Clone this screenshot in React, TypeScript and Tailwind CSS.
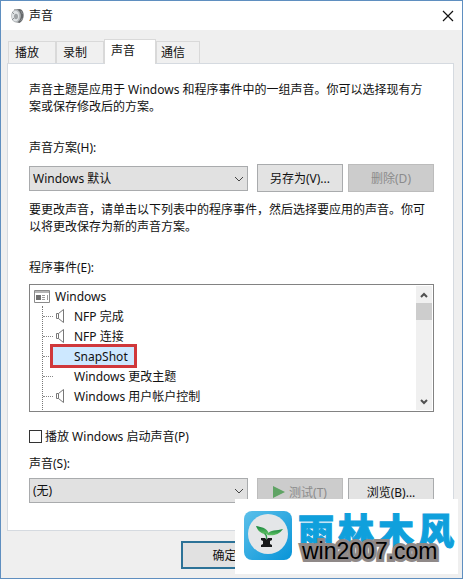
import { type ReactNode, useState } from "react";
import clsx from "clsx";

const tabs = [
  { name: "播放", size: "w-12 pl-1.5" },
  { name: "录制", size: "w-12 pl-1.5" },
  { name: "声音", size: "w-[52px] pl-1.5" },
  { name: "通信", size: "w-11 pl-1" },
];

const programEvents = [
  { name: "NFP 完成", hasSound: true },
  { name: "NFP 连接", hasSound: true },
  { name: "SnapShot", hasSound: false },
  { name: "Windows 更改主题", hasSound: false },
  { name: "Windows 用户帐户控制", hasSound: true },
];

const Chevron = ({ className }: { className?: string }) => (
  <svg viewBox="0 0 10 6" className={className} fill="none">
    <path d="M1 1l4 4 4-4" stroke="currentColor" />
  </svg>
);

const SoundIcon = () => (
  <svg viewBox="0 0 16 16" className="h-4 w-4">
    <path d="M5 1.5l6-.5c3 1 4 4 3.5 8-.5 3-2 5-4 6l-4-1z" fill="#66696b" />
    <ellipse cx="7" cy="8" rx="4.8" ry="6.5" fill="#b4b8bb" />
    <ellipse cx="6.5" cy="8" rx="3.6" ry="5.2" fill="#dfe2e4" />
    <ellipse cx="7" cy="8.5" rx="2" ry="2.8" fill="#9ea2a5" />
    <path d="M3 4l2 2M3 12l2-2M12 3l1.5 3M11.5 13l2-3" stroke="#8d9194" />
  </svg>
);

const SpeakerIcon = () => (
  <svg viewBox="0 0 10 14" className="h-3.5 w-2.5" fill="none">
    <path d="M.5 4.5h2l5-4v13l-5-4h-2zM2.5 4.5v5" stroke="#777" />
  </svg>
);

const WindowIcon = () => (
  <svg viewBox="0 0 16 13" className="h-[13px] w-4">
    <path d="M.5.5h15v12H.5z" fill="#fff" stroke="#8a8a8a" />
    <path d="M1 1h14v2H1z" fill="#b5b5b5" />
    <path d="M2 5h5v5H2z" fill="#6f6f6f" />
    <path d="M8 5.5h3M8 7.5h3M8 9.5h3M13.5 5v5" stroke="#9a9a9a" />
  </svg>
);

interface ButtonProps {
  children: ReactNode;
  disabled?: boolean;
  primary?: boolean;
}

const DialogButton = ({ children, disabled, primary }: ButtonProps) => (
  <button
    type="button"
    disabled={disabled}
    className={clsx(
      "flex h-7 shrink-0 items-center justify-center gap-1",
      primary
        ? "w-[87px] border-2 border-[#2c7297] bg-[#e1e1e1]"
        : "w-[86px] border",
      !primary && !disabled && "border-[#a9abad] bg-[#e3e3e3]",
      disabled && "border-[#bcbcbc] bg-[#cccccc] text-[#8b8b8b]"
    )}
  >
    {children}
  </button>
);

const DialogSelect = ({ id, value }: { id: string; value: string }) => (
  <div className="relative mr-1 min-w-0 flex-1">
    <select
      id={id}
      defaultValue={value}
      className="block h-[25px] w-full appearance-none border border-[#a9abad] bg-[#e1e1e1] px-[3px]"
    >
      <option>{value}</option>
    </select>
    <Chevron className="pointer-events-none absolute top-[10px] right-1 h-1.5 w-2.5 text-[#444]" />
  </div>
);

const EventList = () => {
  const [selected, setSelected] = useState<string>("SnapShot");

  return (
    <div className="mt-2 flex h-32 border border-[#828282] p-px">
      <div className="min-w-0 flex-1 overflow-hidden">
        <div className="flex h-5 items-center gap-[5px] pl-[3px]">
          <WindowIcon />
          <span>Windows</span>
        </div>
        <ul className="ml-[11px] h-[104px] border-l border-dotted border-[#777]">
          {programEvents.map(({ name, hasSound }) => (
            <li key={name} className="flex h-5 items-center">
              <span className="w-2.5 border-t border-dotted border-[#888]" />
              <button
                type="button"
                onClick={() => setSelected(name)}
                className={clsx(
                  "flex items-center text-left",
                  name === selected
                    ? "-ml-[3px] h-6 border-[3px] border-[#d0383b] bg-[#cde8ff] pr-1.5 pl-[3px]"
                    : "h-5 pl-[3px]"
                )}
              >
                <span className="w-[18px]">{hasSound && <SpeakerIcon />}</span>
                {name}
              </button>
            </li>
          ))}
        </ul>
      </div>
      <div className="flex w-4 flex-col items-center bg-[#f0f0f0] text-[#505050]">
        <button type="button" aria-label="Scroll up" className="h-[17px]">
          <svg viewBox="0 0 8 6" className="h-1.5 w-2" fill="none">
            <path d="M1 5l3-3 3 3" stroke="currentColor" strokeWidth="2" />
          </svg>
        </button>
        <div className="h-[17px] w-full bg-[#cdcdcd]" />
        <button type="button" aria-label="Scroll down" className="mt-auto h-[17px]">
          <svg viewBox="0 0 8 6" className="h-1.5 w-2" fill="none">
            <path d="M1 1l3 3 3-3" stroke="currentColor" strokeWidth="2" />
          </svg>
        </button>
      </div>
    </div>
  );
};

const SproutLogo = () => (
  <svg viewBox="0 0 48 49" className="h-[49px] w-12 shrink-0">
    <defs>
      <linearGradient id="tile" x1="0" y1="0" x2="1" y2="1">
        <stop offset="0" stopColor="#5cc0ea" />
        <stop offset="1" stopColor="#0794d8" />
      </linearGradient>
      <linearGradient id="leaf" x1="0" y1="0" x2="0" y2="1">
        <stop offset="0" stopColor="#17853d" />
        <stop offset="1" stopColor="#63c466" />
      </linearGradient>
    </defs>
    <rect width="48" height="49" rx="8" fill="url(#tile)" />
    <circle cx="24" cy="23" r="20" fill="#e4e6e8" />
    <path d="M12 15c4 1 11 1 13 8-6 1-11-2-13-8z" fill="url(#leaf)" />
    <path d="M39 18c-6 2-13 0-16 6 6 1 12 0 16-6z" fill="url(#leaf)" />
    <path d="M21 22q3 2 2 6h-1q0-4-2-5z" fill="#2f9a48" />
    <path d="M17 27h4l1.5 1.5L24 27h4v2l-2 1v3l2 1v2H17v-2l2-1v-3l-2-1z" fill="#17191a" />
  </svg>
);

const Watermark = () => (
  <div className="absolute right-1 bottom-1 flex h-[75px] w-[223px] items-start bg-white pt-3 pl-[9px]">
    <SproutLogo />
    <div className="relative ml-1.5">
      <div className="flex gap-1 font-['Noto_Sans_CJK_SC',sans-serif] text-4xl leading-9 font-black text-[#0fa0dc] [-webkit-text-stroke:1px_#0fa0dc]">
        <span>雨</span>
        <span>林</span>
        <span>木</span>
        <span>风</span>
      </div>
      <div className="absolute top-[26px] left-1 font-['Liberation_Sans',sans-serif] text-[23px] leading-7 text-black [paint-order:stroke_fill] [-webkit-text-stroke:6px_#8f8988]">
        win2007.com
      </div>
    </div>
  </div>
);

const App = () => {
  const [activeTab, setActiveTab] = useState<string>("声音");

  return (
    <div className="relative border border-[#5f8fc0] bg-[#efefef] pb-[9px] font-['Noto_Sans','Noto_Sans_CJK_SC',sans-serif] text-xs leading-[17px] text-[#111]">
      <header className="flex h-[29px] items-center bg-white pr-2 pl-2">
        <SoundIcon />
        <h1 className="ml-1">声音</h1>
        <button type="button" aria-label="Close" className="ml-auto">
          <svg viewBox="0 0 12 12" className="h-3 w-3" fill="none">
            <path d="M1 1l10 10M11 1L1 11" stroke="#111" strokeWidth="1.2" />
          </svg>
        </button>
      </header>

      <main className="mr-2 ml-1.5 pt-[9px]">
        <div role="tablist" className="flex items-end pl-px">
          {tabs.map(({ name, size }) => (
            <button
              key={name}
              type="button"
              role="tab"
              aria-selected={name === activeTab}
              onClick={() => setActiveTab(name)}
              className={clsx(
                "border border-b-0 border-[#d9d9d9] text-left",
                size,
                name === activeTab
                  ? "relative -mb-px h-[25px] bg-white pb-1"
                  : "h-[22px] bg-[#f0f0f0]"
              )}
            >
              {name}
            </button>
          ))}
        </div>

        <section className="border border-[#d5dae0] bg-white pt-[17px] pr-[19px] pb-6 pl-[21px]">
          <p className="pr-2">
            声音主题是应用于 Windows 和程序事件中的一组声音。你可以选择现有方案或保存修改后的方案。
          </p>

          <label htmlFor="scheme" className="mt-6 block">
            声音方案(H):
          </label>
          <div className="mt-2 flex items-center gap-[5px]">
            <DialogSelect id="scheme" value="Windows 默认" />
            <DialogButton>另存为(V)...</DialogButton>
            <DialogButton disabled>删除(D)</DialogButton>
          </div>

          <p className="mt-[9px] pr-2">
            要更改声音，请单击以下列表中的程序事件，然后选择要应用的声音。你可以将更改保存为新的声音方案。
          </p>

          <h2 className="mt-6">程序事件(E):</h2>
          <EventList />

          <label className="mt-4 flex items-center gap-[3px]">
            <input
              type="checkbox"
              className="h-[13px] w-[13px] appearance-none border border-[#333] bg-white checked:bg-[#333]"
            />
            播放 Windows 启动声音(P)
          </label>

          <label htmlFor="sound" className="mt-2.5 block">
            声音(S):
          </label>
          <div className="mt-1.5 flex items-start gap-[5px]">
            <DialogSelect id="sound" value="(无)" />
            <DialogButton disabled>
              <svg viewBox="0 0 12 12" className="h-3 w-3">
                <path d="M0 0l12 6-12 6z" fill="#5fa364" />
              </svg>
              测试(T)
            </DialogButton>
            <DialogButton>浏览(B)...</DialogButton>
          </div>
        </section>

        <footer className="flex justify-end pt-2.5 pr-[186px]">
          <DialogButton primary>确定</DialogButton>
        </footer>
      </main>

      <Watermark />
    </div>
  );
};

export default App;
